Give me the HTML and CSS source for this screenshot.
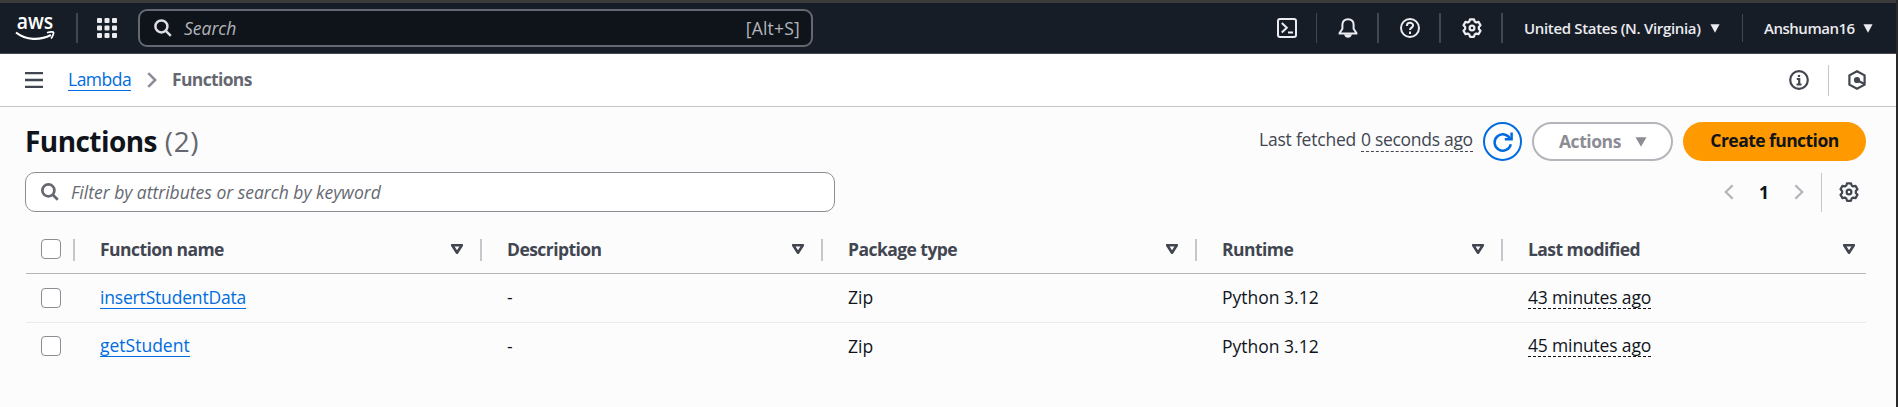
FILE: index.html
```html
<!DOCTYPE html>
<html lang="en">
<head>
<meta charset="utf-8">
<title>Functions - Lambda</title>
<link rel="stylesheet" href="styles.css">
</head>
<body>
<svg class="defs" width="0" height="0">
  <symbol id="gear" viewBox="0 0 16 16"><path stroke-linejoin="round" d="M6.400 1h3.200l.6 1.900 1.100.65 1.900-.45 1.600 2.700-1.300 1.400v1.600l1.300 1.400-1.600 2.700-1.900-.45-1.100.65-.6 1.900H6.400l-.6-1.900-1.100-.65-1.900.45-1.600-2.700 1.300-1.400V7.200L1.200 5.800l1.600-2.700 1.900.45 1.100-.65z"/><circle cx="8" cy="8" r="1.900"/></symbol>
  <symbol id="search" viewBox="0 0 18 18"><circle cx="7.400" cy="7.400" r="6"/><path d="M11.800 11.800l5 5"/></symbol>
  <symbol id="sort" viewBox="0 0 12 10"><path d="M1.200 1.200h9.600L6 8.700z"/></symbol>
  <symbol id="caret" viewBox="0 0 12 10"><path d="M.5.2h11L6 9.800z"/></symbol>
  <symbol id="chevron" viewBox="0 0 10 16"><path d="M1.300 1.200L8.200 8l-6.900 6.800"/></symbol>
</svg>
<div class="strip"></div>
<header class="nav">
  <svg class="logo" width="40" height="34" viewBox="0 -3 40 34"><text class="logo-text" x="1.800" y="14.500" textLength="36.500" lengthAdjust="spacingAndGlyphs">aws</text><path d="M1 18.500C11 26.500 25 26.500 36 21" fill="none" stroke="#fff" stroke-width="2.200"/><path d="M32 18.700c3-.9 6.500-1 6.600-.2s-1 4.500-2.600 6" fill="none" stroke="#fff" stroke-width="1.700"/></svg>
  <span class="bar bar-logo"></span>
  <svg class="apps" width="20" height="20" fill="#ebebf0"><rect width="5" height="5" rx="1"/><rect x="7.500" width="5" height="5" rx="1"/><rect x="15" width="5" height="5" rx="1"/><rect y="7.500" width="5" height="5" rx="1"/><rect x="7.500" y="7.500" width="5" height="5" rx="1"/><rect x="15" y="7.500" width="5" height="5" rx="1"/><rect y="15" width="5" height="5" rx="1"/><rect x="7.500" y="15" width="5" height="5" rx="1"/><rect x="15" y="15" width="5" height="5" rx="1"/></svg>
  <div class="nav-search"><svg class="line" width="18" height="18"><use href="#search"/></svg><span class="nav-ph">Search</span><span class="keys">[Alt+S]</span></div>
  <div class="tools">
    <span class="tool tool-first"><svg class="line" width="20" height="20"><rect x="1" y="1" width="18" height="18" rx="2"/><path d="M4.800 5l5 4.700-5 4.700M11 14.500h5"/></svg></span>
    <span class="tool"><svg class="line" width="20" height="20"><path d="M10 1.200c-3.600 0-5.600 2.400-5.600 5.600v4L1.600 15v.5h16.800V15l-2.800-4.200v-4c0-3.200-2-5.600-5.600-5.600z"/><path d="M7.500 17.300c.8 2 4.200 2 5 0z" fill="#ebebf0"/></svg></span>
    <span class="tool"><svg class="line" width="20" height="20"><circle cx="10" cy="10" r="9"/><path d="M6.900 8c0-4.200 6.200-4 6.200-.5 0 2-3.100 2.300-3.100 4.500"/><path d="M10 13.500v2.500"/></svg></span>
    <span class="tool tool-last"><svg class="line" width="20" height="20"><use href="#gear"/></svg></span>
  </div>
  <span class="region">United States (N. Virginia)</span><svg class="nav-caret" width="10" height="9" viewBox="0 0 12 10" preserveAspectRatio="none"><use href="#caret"/></svg>
  <span class="bar bar-user"></span>
  <span class="user">Anshuman16</span><svg class="nav-caret" width="10" height="9" viewBox="0 0 12 10" preserveAspectRatio="none"><use href="#caret"/></svg>
</header>
<div class="crumbs">
  <svg class="burger" width="18" height="16"><path d="M0 1.200h18M0 8h18M0 14.800h18"/></svg>
  <a class="crumb-link">Lambda</a>
  <svg class="crumb-sep" width="10" height="16"><use href="#chevron"/></svg>
  <span class="crumb-now">Functions</span>
  <svg class="info dark" width="20" height="20"><circle cx="10" cy="10" r="8.800"/><path d="M7.800 9h2.400v5M7.500 14.500h5M10 5v2"/></svg>
  <span class="crumb-bar"></span>
  <svg class="hex dark" width="18" height="20"><path d="M9 1.200l7.600 4.200v9.200L9 18.800l-7.600-4.200V5.400z"/><circle cx="9" cy="10" r="2" fill="#424650"/><path d="M9.500 10.500l7 3.500"/></svg>
</div>
<main class="panel">
  <div class="head">
    <h1 class="title">Functions <span class="count">(2)</span></h1>
    <span class="fetched">Last fetched</span><span class="ago">0 seconds ago</span>
    <span class="refresh"><svg width="22" height="22"><path d="M18.800 13.200a8.200 8.200 0 1 1-.6-5.200"/><path d="M19.600 1.500v6.800h-6.800"/></svg></span>
    <span class="actions">Actions<svg width="12" height="10"><use href="#caret"/></svg></span>
    <span class="create">Create function</span>
  </div>
  <div class="filter-row">
    <div class="filter"><svg width="18" height="18"><use href="#search"/></svg><span class="filter-ph">Filter by attributes or search by keyword</span></div>
    <svg class="page-arrow prev" width="10" height="16"><use href="#chevron"/></svg>
    <span class="page">1</span>
    <svg class="page-arrow" width="10" height="16"><use href="#chevron"/></svg>
    <span class="page-bar"></span>
    <svg class="dark" width="20" height="20"><use href="#gear"/></svg>
  </div>
  <div class="row row-head">
    <div class="cell check"><span class="box"></span></div>
    <div class="cell">Function name<svg class="sort" width="12" height="10"><use href="#sort"/></svg></div>
    <div class="cell">Description<svg class="sort" width="12" height="10"><use href="#sort"/></svg></div>
    <div class="cell">Package type<svg class="sort" width="12" height="10"><use href="#sort"/></svg></div>
    <div class="cell">Runtime<svg class="sort" width="12" height="10"><use href="#sort"/></svg></div>
    <div class="cell">Last modified<svg class="sort" width="12" height="10"><use href="#sort"/></svg></div>
  </div>
  <div class="row row-first">
    <div class="cell check"><span class="box"></span></div>
    <div class="cell"><a class="fn">insertStudentData</a></div>
    <div class="cell">-</div><div class="cell">Zip</div>
    <div class="cell">Python 3.12</div>
    <div class="cell"><span class="when">43 minutes ago</span></div>
  </div>
  <div class="row row-second">
    <div class="cell check"><span class="box"></span></div>
    <div class="cell"><a class="fn fn-short">getStudent</a></div>
    <div class="cell">-</div><div class="cell">Zip</div>
    <div class="cell">Python 3.12</div>
    <div class="cell"><span class="when">45 minutes ago</span></div>
  </div>
</main>
</body>
</html>
```
FILE: styles.css
```css
* { box-sizing: border-box; }
body {
  margin: 0; height: 407px; overflow: hidden; background: #fcfcfd;
  border-right: 2px solid #29292a; color: #0f141a;
  font: 17.5px/24px "Open Sans", "Noto Sans", sans-serif; font-stretch: 88%;
  white-space: nowrap;
}
svg { display: block; flex: none; overflow: visible; }
.defs { position: absolute; }
.strip { height: 3px; margin-right: -2px; background: #3b3b3b; }
.nav { display: flex; align-items: center; height: 51px; padding: 0 23px 0 15px; background: #161d26; border-bottom: 1px solid #424650; }
.logo-text { font: 600 22px "Open Sans", sans-serif; fill: #fff; }
.bar { width: 2px; height: 30px; background: #424650; flex: none; }
.bar-logo { margin: 0 19px 0 21px; }
.bar-user { width: 1px; height: 28px; margin: 0 21px 0 22px; }
.nav-search { display: flex; align-items: center; width: 675px; height: 38px; margin-left: 21px; padding: 0 11px 0 14px; border: 2px solid #656871; border-radius: 9px; background: #0f141a; color: #b4b4bb; }
.nav-ph { margin-left: 12px; font-style: italic; }
.keys { margin-left: auto; letter-spacing: .2px; }
.line { fill: none; stroke: #dedee3; stroke-width: 2; }
.nav-search .line { stroke-width: 2.5; }
.tools { display: flex; margin-left: auto; }
.tool { display: flex; align-items: center; width: 62px; height: 30px; border-right: 2px solid #424650; padding-left: 21px; }
.tool-first { width: 61px; border-right-width: 1px; }
.tool-last { margin-right: 21px; }
.tool .line { stroke: #ebebf0; }
.tool use { stroke-width: 1.8; }
.region, .user { font-size: 15px; font-weight: 600; color: #ebebf0; }
.region { width: 178px; letter-spacing: -.33px; }
.user { width: 91px; letter-spacing: -.48px; }
.nav-caret { margin-left: 8px; fill: #ebebf0; }
.crumbs { display: flex; align-items: center; height: 53px; padding: 0 30px 0 25px; background: #fff; border-bottom: 1px solid #c6c6cd; }
.burger { stroke: #424650; stroke-width: 2.3; }
.crumb-link { width: 63px; margin: -2px 0 0 25px; color: #006ce0; border-bottom: 1px solid #006ce0; line-height: 22px; letter-spacing: -.5px; }
.crumb-sep { margin: 0 15px 0 16px; fill: none; stroke: #8c8c94; stroke-width: 2.500; }
.crumb-now { margin-top: -2px; font-weight: 700; letter-spacing: -.65px; color: #656871; }
.dark { fill: none; stroke: #424650; stroke-width: 2.200; }
.dark use { stroke-width: 1.800; }
.info { margin-left: auto; }
.crumb-bar { width: 1px; height: 31px; margin: 0 19px; background: #c6c6cd; }
.panel { padding: 15px 30px 0 25px; }
.head { display: flex; align-items: center; height: 39px; color: #424650; }
.title { margin: -2px auto 0 0; font-size: 28px; line-height: 30px; font-weight: 700; letter-spacing: -.55px; color: #0f141a; }
.count { margin-left: 1px; font-weight: 400; letter-spacing: .7px; color: #656871; }
.fetched { margin: -5px 5px 0 0; letter-spacing: -.22px; }
.ago { width: 112px; margin-top: -4px; border-bottom: 1px dashed #424650; letter-spacing: -.3px; }
.refresh { display: flex; align-items: center; justify-content: center; width: 39px; height: 39px; margin: 0 10px; border: 2px solid #006ce0; border-radius: 50%; background: #fff; }
.refresh path { fill: none; stroke: #006ce0; stroke-width: 2.500; }
.actions { display: flex; align-items: center; justify-content: space-between; width: 141px; height: 39px; padding: 0 24px 2px 25px; border: 2px solid #b4b4bb; border-radius: 20px; background: #fff; color: #8c8c94; font-weight: 700; letter-spacing: -.45px; }
.actions svg { margin-top: 2px; fill: #8c8c94; }
.create { width: 183px; height: 39px; margin-left: 10px; border-radius: 20px; background: #ff9900; color: #0f141a; font-weight: 700; letter-spacing: -.55px; text-align: center; line-height: 37px; }
.filter-row { display: flex; align-items: center; height: 40px; margin-top: 11px; padding-right: 7px; }
.filter { display: flex; align-items: center; width: 810px; height: 40px; margin-right: auto; padding-left: 15px; border: 1px solid #8c8c94; border-radius: 10px; background: #fff; color: #656871; }
.filter svg { fill: none; stroke: #656871; stroke-width: 2.700; }
.filter-ph { margin: -1px 0 0 12px; font-style: italic; }
.page-arrow { fill: none; stroke: #b4b4bb; stroke-width: 2.300; }
.prev { transform: scaleX(-1); }
.page { width: 60px; text-align: center; font-weight: 700; }
.page-bar { width: 1px; height: 39px; margin: 0 17px; background: #c6c6cd; }
.row { display: grid; grid-template-columns: 49px 407px 341px 374px 306px 363px; height: 48px; margin-left: 1px; }
.row-head { height: 62px; padding-top: 13px; border-bottom: 1px solid #b4b4bb; color: #424650; font-weight: 700; letter-spacing: -.55px; }
.row-first { height: 49px; border-bottom: 1px solid #ebebf0; }
.row-second { height: 46px; }
.cell { display: flex; align-items: center; padding: 0 0 2px 25px; }
.row-second .cell { padding-bottom: 1px; }
.row-head .cell { justify-content: space-between; height: 48px; padding: 0 19px 0 25px; background: linear-gradient(#c6c6cd, #c6c6cd) right 14px / 2px 22px no-repeat; }
.row-head .cell:last-child { padding-right: 11px; background: none; }
.row .check { padding: 0 0 0 15px; }
.box { width: 20px; height: 20px; border: 1.500px solid #8c8c94; border-radius: 4px; background: #fff; }
.sort { fill: none; stroke: #424650; stroke-width: 2.600; stroke-linejoin: round; }
.fn { color: #006ce0; border-bottom: 1px solid #006ce0; line-height: 22px; letter-spacing: -.18px; }
.fn-short { letter-spacing: 0; }
.when { border-bottom: 1px dashed #0f141a; line-height: 22px; letter-spacing: -.16px; }
```
